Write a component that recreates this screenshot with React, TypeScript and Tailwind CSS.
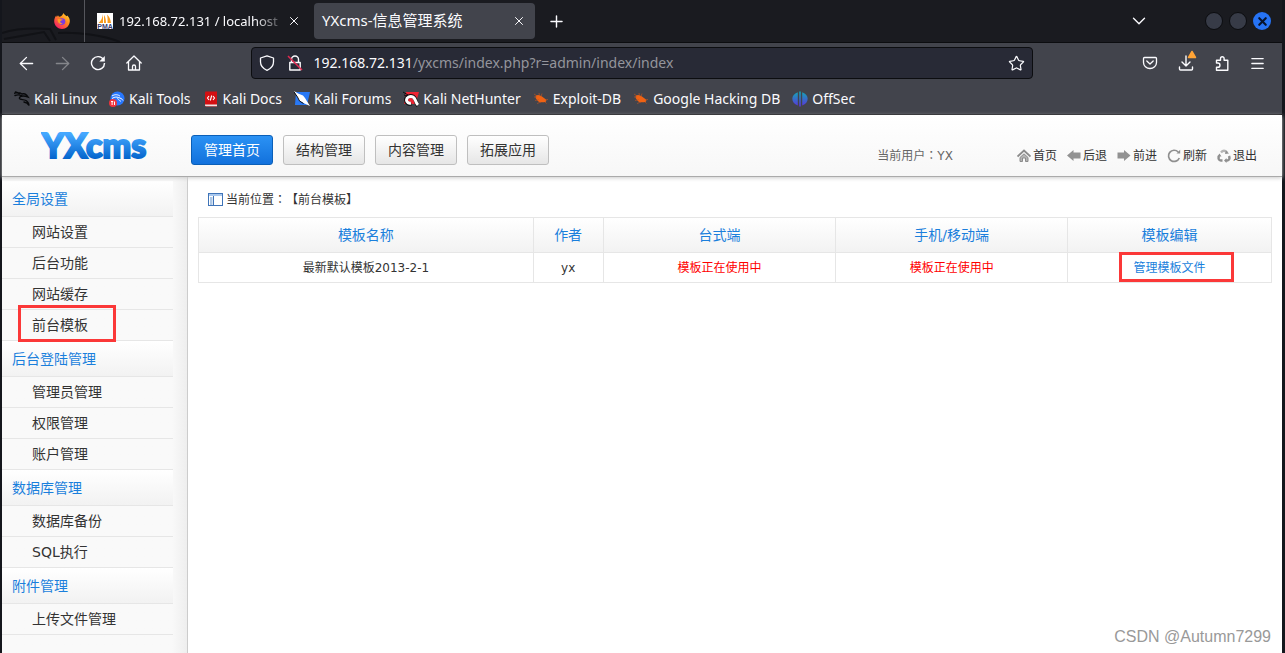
import React from 'react';
import {
  ArrowLeft,
  ArrowRight,
  ChevronDown,
  Menu,
  Plus,
  Star,
  X,
} from 'lucide-react';

const bookmarks = [
  { name: 'Kali Linux', icon: <DragonIcon /> },
  { name: 'Kali Tools', icon: <ToolsIcon /> },
  { name: 'Kali Docs', icon: <DocsIcon /> },
  { name: 'Kali Forums', icon: <ForumsIcon /> },
  { name: 'Kali NetHunter', icon: <NetHunterIcon /> },
  { name: 'Exploit-DB', icon: <BugIcon /> },
  { name: 'Google Hacking DB', icon: <BugIcon /> },
  { name: 'OffSec', icon: <OffSecIcon /> },
];

const topNav = ['管理首页', '结构管理', '内容管理', '拓展应用'];

const quickLinks = [
  { name: '首页', icon: <HouseGlyph /> },
  { name: '后退', icon: <BackGlyph /> },
  { name: '前进', icon: <ForwardGlyph /> },
  { name: '刷新', icon: <RefreshGlyph /> },
  { name: '退出', icon: <RecycleGlyph /> },
];

const menu = [
  { title: '全局设置', items: ['网站设置', '后台功能', '网站缓存', '前台模板'] },
  { title: '后台登陆管理', items: ['管理员管理', '权限管理', '账户管理'] },
  { title: '数据库管理', items: ['数据库备份', 'SQL执行'] },
  { title: '附件管理', items: ['上传文件管理'] },
];

const columns = [
  { name: '模板名称', width: 'w-[31.2%]' },
  { name: '作者', width: 'w-[6.5%]' },
  { name: '台式端', width: 'w-[21.7%]' },
  { name: '手机/移动端', width: 'w-[21.6%]' },
  { name: '模板编辑', width: 'w-[19%]' },
];

/* Bookmark icons */

function DragonIcon() {
  return (
    <svg width="16" height="16" viewBox="0 0 16 16" fill="none" stroke="#08090b" strokeLinecap="round">
      <path d="M.5 2.2c3-1 5.5-.6 7.500.8M1 4.500c2.500-1 5-.7 7 .3M1.500 1l4 1.500M8 3c1.500-.4 3-.2 4.500 1l1.500 2-2.500-.7C8 4.500 5 5.500 5.500 7.500 6 9 9.500 8.200 12 9.500c2 1 2.800 3 3 5-1-2-2.500-3-5-3.500" strokeWidth="1.400" />
    </svg>
  );
}

function ToolsIcon() {
  return (
    <svg width="16" height="16" viewBox="0 0 16 16">
      <circle cx="8.500" cy="7.500" r="7" fill="#2777ff" />
      <path d="M3 5c3-2 6-1.500 8 .2M3 7.500c3-2 5-1.500 6.500-1 2 .8 3.500 1 4.500 3M9 6.500c-1 2 1.500 2.500 3 4" stroke="#fff" fill="none" />
      <circle cx="4" cy="12" r="4" fill="#f0323c" />
      <path d="M2 10.500h2.200M3.100 10.500v3.500M5.500 10.500v3.500" stroke="#fff" strokeWidth="1" />
    </svg>
  );
}

function DocsIcon() {
  return (
    <svg width="16" height="16" viewBox="0 0 16 16">
      <path d="M2 1.500Q2 .5 3 .5h11v15H3q-1 0-1-1z" fill="#d40f12" />
      <path d="M2 13.500h12v1.800H3q-1 0-1-1z" fill="#ece4e4" />
      <path d="M6 5 4.500 7 6 9M10 5l1.500 2L10 9M8.700 4.500 7.300 9.500" stroke="#fff" fill="none" strokeWidth="1.100" />
    </svg>
  );
}

function ForumsIcon() {
  return (
    <svg width="16" height="16" viewBox="0 0 16 16">
      <path d="M2 1h14l-3 13H1z" fill="#2878f5" />
      <path d="M0 0l4 2.500 5 2 2 2.500 1.500 2.500 3.500 5.500-5.500-2.500L5 9.500 3 5.500z" fill="#fff" />
      <path d="M0 1l3.500 5 2 4 4 2.500" stroke="#0c0d10" fill="none" />
    </svg>
  );
}

function NetHunterIcon() {
  return (
    <svg width="16" height="16" viewBox="0 0 16 16">
      <path d="M3 1h13l-3.500 12H1z" fill="#ee2433" />
      <path d="M0 1l5 3M1 4l4 1" stroke="#0c0d10" />
      <path d="M15 14.500C12 12 14 8 10 5.500 7 4 3 6 3 9c0 3 3 4.500 5.500 3.500" stroke="#0c0d10" strokeWidth="4" fill="none" />
      <path d="M15 14C12 11 13 8 10 6 7 4.500 3.500 6.500 3.500 9c0 2.500 2.500 3.500 4.500 3" stroke="#fff" strokeWidth="3" fill="none" />
    </svg>
  );
}

function BugIcon() {
  return (
    <svg width="16" height="16" viewBox="0 0 16 16">
      <path d="M3 4.500C5 3.500 7 4 9 5.500l4 3c1 2-.5 3-3 2.700-3 .3-5-.5-6-2.500C3 8 2 6 3 4.500z" fill="#ef6213" />
      <path d="M1 6h3M1 3l3 2M2 9.500l4-1M4 12.500l4-1.500M9 2.500l-1 3M15 8.500l-3 .5M6 2l.5 3M12 11l1.500 1.500" stroke="#c9581f" strokeWidth=".6" />
    </svg>
  );
}

function OffSecIcon() {
  return (
    <svg width="16" height="16" viewBox="0 0 16 16">
      <defs>
        <linearGradient id="offsec" x1="0" y1="0" x2="0" y2="1">
          <stop offset="0" stopColor="#12a8b4" />
          <stop offset="1" stopColor="#5b33dd" />
        </linearGradient>
      </defs>
      <path d="M5.800 1.200v13.400C-1.500 12-1.500 3.500 5.800 1.200zM10.200 1.200v13.400C17.500 12 17.500 3.500 10.200 1.200zM7.200.5h1.600v15H7.200z" fill="url(#offsec)" />
    </svg>
  );
}

/* Browser icons */

function FirefoxIcon() {
  return (
    <svg width="16" height="16" viewBox="0 0 16 16">
      <defs>
        <linearGradient id="fox" x1="1" y1="0" x2="0.2" y2="1">
          <stop offset="0" stopColor="#ffe23a" />
          <stop offset=".45" stopColor="#ff8a1c" />
          <stop offset="1" stopColor="#f5156c" />
        </linearGradient>
      </defs>
      <path d="M9.500 0c.5 1.500 2 2 3 3.300l.8-.8c2 2 2.700 4 2.500 6C15.500 13 12 16 8 16S.3 12.500.2 8.500C.1 6 1 4 2.200 2.500l.6 1.400L4 2.200l1 1.600C7 3.500 8.500 2.500 9.500 0z" fill="url(#fox)" />
      <circle cx="8" cy="8.600" r="3.300" fill="#7a3be0" />
      <path d="M3.500 6.500C5.500 5.500 7 6.500 9 6.700c-1 .8-2.500.6-2.800 1.800-.2 1 1 1.800 2.600 1.600-1.500 2-5 1-5.300-3.600z" fill="#ff9d23" />
    </svg>
  );
}

function PmaIcon() {
  return (
    <svg width="16" height="16" viewBox="0 0 16 16">
      <rect width="16" height="16" fill="#fff" />
      <path d="M6 1v9H1.500C4 8 5.500 5 6 1zM7 2c1.500 2 2 5 2 8H7zM10 1.500c2.500 2 3.500 5 4 8.500h-3.500c.2-3 .2-6-.5-8.500z" fill="#f89b1c" />
      <text x="8" y="15.500" textAnchor="middle" fontFamily="Liberation Sans, sans-serif" fontWeight="700" fontSize="7" fill="#3b3f72">PMA</text>
    </svg>
  );
}

function ReloadIcon() {
  return (
    <svg width="16" height="16" viewBox="0 0 16 16" fill="none" stroke="#fbfbfe" strokeWidth="1.400">
      <path d="M13.600 4.800A6.500 6.500 0 1 0 14.500 8" />
      <path d="M14.800 1v5.500H9.300z" fill="#fbfbfe" stroke="none" />
    </svg>
  );
}

function HomeIcon() {
  return (
    <svg width="16" height="16" viewBox="0 0 16 16" fill="none" stroke="#fbfbfe" strokeWidth="1.300" strokeLinejoin="round" strokeLinecap="round">
      <path d="M.8 8 8 1l7.200 7M2.500 6.800V15h11V6.800M6.500 15v-3.500q0-1.500 1.500-1.500t1.500 1.500V15" />
    </svg>
  );
}

function ShieldIcon() {
  return (
    <svg width="16" height="16" viewBox="0 0 16 16" fill="none" stroke="#fbfbfe" strokeWidth="1.300" strokeLinejoin="round">
      <path d="M8 .8 14.500 3v4c0 3.500-2.500 6.500-6.500 8.300C4 13.500 1.500 10.500 1.500 7V3z" />
    </svg>
  );
}

function InsecureIcon() {
  return (
    <svg width="16" height="16" viewBox="0 0 16 16" fill="none" stroke="#fbfbfe" strokeWidth="1.400" strokeLinejoin="round">
      <path d="M4.500 7.500V4.500a3.500 3.500 0 0 1 7 0v3M2.800 7.500h10.400V15H2.800z" />
      <path d="M1 1l14 14" stroke="#e22850" strokeWidth="1.500" />
    </svg>
  );
}

function PocketIcon() {
  return (
    <svg width="16" height="16" viewBox="0 0 16 16" fill="none" stroke="#fbfbfe" strokeWidth="1.300" strokeLinecap="round" strokeLinejoin="round">
      <path d="M2.500 2.500h11q1 0 1 1v4a6.500 6 0 0 1-13 0v-4q0-1 1-1z" />
      <path d="M4.800 6 8 9l3.200-3" />
    </svg>
  );
}

function DownloadIcon() {
  return (
    <svg width="16" height="16" viewBox="0 0 16 16" fill="none" stroke="#fbfbfe" strokeWidth="1.400" strokeLinecap="round" strokeLinejoin="round">
      <path d="M8 1v10M4 7l4 4 4-4M1.500 12v2q0 1 1 1h11q1 0 1-1v-2" />
    </svg>
  );
}

function PuzzleIcon() {
  return (
    <svg width="16" height="16" viewBox="0 0 16 16" fill="none" stroke="#fbfbfe" strokeWidth="1.400" strokeLinejoin="round">
      <path d="M2.500 8V5.300h4V3.500a1.800 1.800 0 0 1 3.600 0v1.800h3.700v10H2.500v-3h1.300a2 2 0 0 0 0-4.300z" />
    </svg>
  );
}

/* Admin toolbar glyphs */

function HouseGlyph() {
  return (
    <svg width="14" height="14" viewBox="0 0 14 14" fill="none" stroke="#8c8c8c">
      <path d="M.5 7.500 7 1.500 13.500 7.500" strokeWidth="1.900" />
      <path d="M3 8.500V12.500h2.500V9h3v3.500H11V8.500L7 4.800z" fill="#b4b4b4" />
    </svg>
  );
}

function BackGlyph() {
  return (
    <svg width="14" height="14" viewBox="0 0 14 14">
      <path d="M0 6.500 6.500 1V3.500H13.500v6H6.500V12z" fill="#929292" />
    </svg>
  );
}

function ForwardGlyph() {
  return (
    <svg width="14" height="14" viewBox="0 0 14 14">
      <path d="M13.500 6.500 7 1V3.500H.5v6H7V12z" fill="#929292" />
    </svg>
  );
}

function RefreshGlyph() {
  return (
    <svg width="14" height="14" viewBox="0 0 14 14" fill="none" stroke="#8f8f8f" strokeWidth="1.700">
      <path d="M11.200 3A5.600 5.600 0 1 0 12.300 9" />
      <path d="M13.200.8v3.700H9.500z" fill="#8f8f8f" stroke="none" />
    </svg>
  );
}

function RecycleGlyph() {
  return (
    <svg width="14" height="14" viewBox="0 0 14 14" fill="none" stroke="#8f8f8f" strokeWidth="2.400">
      <path d="M4 3.500q3-3.500 6 0" stroke="#b5b5b5" />
      <path d="M12 7q1.500 4-2 4.500H9M5.500 11.500H4Q.5 11 2 7" />
      <path d="M9 1.500l3 3-4 .5zM9.500 9v5l-2.500-2.500zM.3 7.500 2.500 4.500l2 3z" fill="#8f8f8f" stroke="none" />
    </svg>
  );
}

function PanelGlyph() {
  return (
    <svg width="15" height="13" viewBox="0 0 15 13">
      <rect x=".5" y=".5" width="14" height="12" fill="#fff" stroke="#3f74b8" />
      <path d="M1 1h13v2H1z" fill="#a9c8ee" />
      <path d="M5.500 3v9" stroke="#3f74b8" />
      <path d="M2 5h2.500M2 7h2.500M2 9h2.500M2 11h2.500" stroke="#5b8ecb" />
    </svg>
  );
}

function Logo() {
  return (
    <svg width="130" height="44" viewBox="0 0 130 44" role="img" aria-label="YXcms">
      <defs>
        <linearGradient id="logo" gradientUnits="userSpaceOnUse" x1="0" y1="10" x2="0" y2="35">
          <stop offset="0" stopColor="#45a8ff" />
          <stop offset="1" stopColor="#0464cc" />
        </linearGradient>
      </defs>
      <text
        x="1"
        y="34"
        fontFamily="Lato, sans-serif"
        fontWeight="900"
        fontSize="34"
        fill="url(#logo)"
        stroke="url(#logo)"
        strokeWidth="2"
      >
        YXcms
      </text>
    </svg>
  );
}

function TabBar() {
  return (
    <div className="relative flex h-[43px] items-center border-b border-[#0c0d10] bg-[#1a1b20]">
      <svg className="absolute left-0 bottom-0" width="130" height="16" viewBox="0 0 130 16" fill="none" stroke="#111216" strokeWidth="2">
        <path d="M0 7C15 2 30 2 48 3l6 11M2 13l40-7 6 9M56 7c20-1 45 2 62 9" />
      </svg>
      <button aria-label="Firefox" className="relative flex h-full w-[83px] items-center justify-end border-r border-[#55565c] pr-[14px]">
        <FirefoxIcon />
      </button>
      <div className="relative flex h-9 w-[229px] items-center gap-[6px] pl-3 text-[#fbfbfe]">
        <PmaIcon />
        <span className="whitespace-nowrap text-[13px] [mask-image:linear-gradient(to_right,#000_85%,#0004)]">
          192.168.72.131 / localhost
        </span>
        <button aria-label="Close tab" className="mr-[13px] ml-auto">
          <X size={14} strokeWidth={1.7} />
        </button>
      </div>
      <div className="flex h-9 w-[221px] items-center justify-between rounded bg-[#42444c] pl-2 pr-[9px] text-[15px] text-[#fbfbfe]">
        <span>YXcms-信息管理系统</span>
        <button aria-label="Close tab">
          <X size={14} strokeWidth={1.7} />
        </button>
      </div>
      <button aria-label="New tab" className="ml-3 text-[#fbfbfe]">
        <Plus size={19} strokeWidth={1.8} />
      </button>
      <button aria-label="List all tabs" className="ml-auto mr-[55px] text-[#fbfbfe]">
        <ChevronDown size={22} strokeWidth={1.5} />
      </button>
      <div className="mr-[11px] flex gap-[6px]">
        <button aria-label="Minimize" className="size-[18px] rounded-full border border-[#0b0c0f] bg-[#373b47]" />
        <button aria-label="Maximize" className="size-[18px] rounded-full border border-[#0b0c0f] bg-[#373b47]" />
        <button aria-label="Close" className="flex size-[18px] items-center justify-center rounded-full bg-[#2673f5] text-[#07142e]">
          <X size={13} strokeWidth={4} />
        </button>
      </div>
    </div>
  );
}

function NavBar() {
  return (
    <div className="flex h-10 items-center px-[6px] text-[#fbfbfe]">
      <button aria-label="Back" className="flex w-9 justify-center"><ArrowLeft size={21} strokeWidth={1.5} /></button>
      <button aria-label="Forward" className="flex w-9 justify-center text-[#85868b]"><ArrowRight size={21} strokeWidth={1.5} /></button>
      <button aria-label="Reload" className="flex w-9 justify-center"><ReloadIcon /></button>
      <button aria-label="Home" className="flex w-9 justify-center"><HomeIcon /></button>
      <div className="flex-10" />
      <div className="flex h-8 flex-77 items-center rounded border border-[#0c0d10] bg-[#282a36] px-[7px]">
        <ShieldIcon />
        <span className="ml-3 mr-[10px]"><InsecureIcon /></span>
        <label htmlFor="address">192.168.72.131</label>
        <input
          id="address"
          className="min-w-0 flex-1 bg-transparent text-[#94959c] outline-none"
          defaultValue="/yxcms/index.php?r=admin/index/index"
        />
        <button aria-label="Bookmark this page"><Star size={17} strokeWidth={1.7} /></button>
      </div>
      <div className="flex-10" />
      <button aria-label="Pocket" className="flex w-9 justify-center"><PocketIcon /></button>
      <button aria-label="Downloads" className="relative flex w-9 justify-center">
        <DownloadIcon />
        <svg className="absolute -top-[5px] left-[19px]" width="10" height="9" viewBox="0 0 10 9">
          <path d="M5 1.500 8.500 7.500h-7z" fill="#ffa436" stroke="#ffa436" strokeWidth="1.500" strokeLinejoin="round" />
        </svg>
      </button>
      <button aria-label="Extensions" className="flex w-9 justify-center"><PuzzleIcon /></button>
      <button aria-label="Menu" className="flex w-9 justify-center"><Menu size={17} strokeWidth={1.8} /></button>
    </div>
  );
}

function Header() {
  return (
    <header className="z-10 flex h-[62px] items-center border-b border-[#aaaaaa] bg-linear-to-b from-white to-[#f7f7f7] pl-[39px] pr-[25px] shadow-[0_1px_4px_#cccccc]">
      <h1 className="w-[150px]">
        <Logo />
      </h1>
      <nav className="mt-2 flex gap-[10px]">
        {topNav.map((name, index) => (
          <button
            key={name}
            className={
              index === 0
                ? 'h-[30px] rounded-[3px] border border-[#0a5fb8] bg-linear-to-b from-[#2b92f4] to-[#1271dc] px-3 text-white'
                : 'h-[30px] rounded-[3px] border border-[#bfbfbf] bg-linear-to-b from-white to-[#e6e6e6] px-3 text-[#333333]'
            }
          >
            {name}
          </button>
        ))}
      </nav>
      <div className="mt-5 ml-auto flex items-center text-xs text-[#333333]">
        <span className="mr-16 font-['DejaVu_Sans','Noto_Sans_CJK_TC',sans-serif] text-[#666666]">当前用户：YX</span>
        <div className="flex gap-[10px]">
          {quickLinks.map((link) => (
            <a key={link.name} href="#" className="flex items-center gap-[2px]">
              {link.icon}
              {link.name}
            </a>
          ))}
        </div>
      </div>
    </header>
  );
}

function Sidebar() {
  return (
    <aside className="w-[186px] border-r border-[#cccccc] bg-linear-to-r from-[#f9f9f9] from-92% to-[#eeeeee] pt-1 pr-[14px]">
      {menu.map((group) => (
        <section key={group.title}>
          <h2 className="h-9 border-b border-[#e6e6e6] bg-linear-to-b from-white to-[#f2f2f2] pl-[10px] leading-9 text-[#1a7fdc]">
            {group.title}
          </h2>
          <ul>
            {group.items.map((item) => (
              <li key={item} className="relative h-[31px] border-b border-[#e6e6e6] pl-[30px] leading-[30px] text-[#333333]">
                <a href="#">{item}</a>
                {item === '前台模板' && (
                  <span className="absolute -top-[5px] -bottom-[2px] left-4 w-[98px] border-3 border-[#fb3838]" />
                )}
              </li>
            ))}
          </ul>
        </section>
      ))}
    </aside>
  );
}

function Content() {
  return (
    <main className="flex-1 bg-white px-[10px]">
      <div className="flex h-10 items-center gap-[3px] pt-1 pl-[10px] text-xs text-[#333333]">
        <PanelGlyph />
        <span className="pt-[2px] font-['DejaVu_Sans','Noto_Sans_CJK_TC',sans-serif] [text-spacing-trim:space-all]">
          当前位置：【前台模板】
        </span>
      </div>
      <table className="w-full table-fixed border-collapse text-center">
        <thead>
          <tr className="h-[35px] bg-linear-to-b from-white to-[#f2f2f2] text-[#1a7fdc]">
            {columns.map((column) => (
              <th key={column.name} className={`${column.width} border border-[#e6e6e6] font-normal`}>
                {column.name}
              </th>
            ))}
          </tr>
        </thead>
        <tbody>
          <tr className="h-[30px] text-xs text-[#333333]">
            <td className="border border-[#e6e6e6]">最新默认模板2013-2-1</td>
            <td className="border border-[#e6e6e6]">yx</td>
            <td className="border border-[#e6e6e6] text-[#ff0000]">模板正在使用中</td>
            <td className="border border-[#e6e6e6] text-[#ff0000]">模板正在使用中</td>
            <td className="border border-[#e6e6e6]">
              <span className="relative inline-block">
                <a href="#" className="text-[#1a7fdc]">管理模板文件</a>
                <span className="absolute -top-2 -right-7 -bottom-[6px] -left-[15px] border-3 border-[#fb3838]" />
              </span>
            </td>
          </tr>
        </tbody>
      </table>
    </main>
  );
}

export default function App() {
  return (
    <div className="relative flex min-h-screen flex-col border-r-3 border-l-2 border-[#14161c] bg-white">
      <div className="bg-[#42444c] font-['Noto_Sans','Noto_Sans_CJK_SC',sans-serif] text-sm">
        <TabBar />
        <NavBar />
        <div className="flex h-8 items-center gap-3 border-b border-[#0c0d10] pl-3 text-[#fbfbfe]">
          {bookmarks.map((bookmark) => (
            <a key={bookmark.name} href="#" className="flex items-center gap-1 whitespace-nowrap">
              {bookmark.icon}
              {bookmark.name}
            </a>
          ))}
        </div>
      </div>

      <div className="flex flex-1 flex-col font-['DejaVu_Sans','Noto_Sans_CJK_SC',sans-serif] text-sm">
        <Header />
        <div className="flex flex-1">
          <Sidebar />
          <Content />
        </div>
      </div>

      <div className="absolute right-[11px] bottom-1 font-['Liberation_Sans',sans-serif] text-base text-[#999999]">
        CSDN @Autumn7299
      </div>
    </div>
  );
}
